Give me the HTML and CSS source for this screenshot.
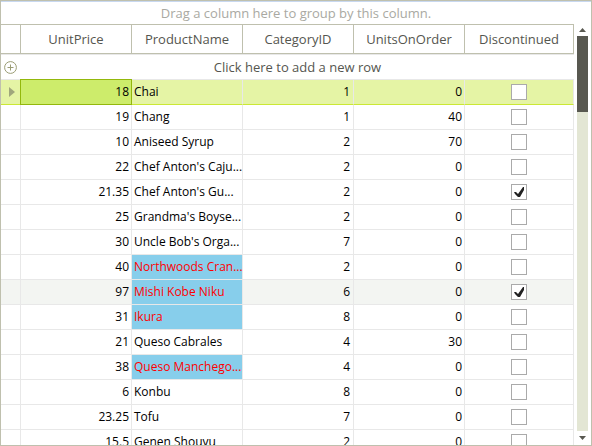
FILE: index.html
```
<!DOCTYPE html>
<html lang="en">
<head>
<meta charset="utf-8">
<title>Products</title>
<link rel="stylesheet" href="styles.css">
</head>
<body>
<main class="grid">
  <div class="group-panel">Drag a column here to group by this column.</div>
  <div class="view">
    <div class="table-wrap">
      <table class="products">
        <colgroup><col class="col-indicator"><col><col><col><col><col class="col-check"></colgroup>
        <thead>
          <tr><th></th><th>UnitPrice</th><th>ProductName</th><th>CategoryID</th><th>UnitsOnOrder</th><th>Discontinued</th></tr>
        </thead>
        <tbody>
          <tr class="new-row">
            <td class="indicator"><svg class="plus" viewBox="0 0 13 13" aria-hidden="true"><circle cx="6.5" cy="6.5" r="5.9"/><path d="M6.5 3.5v6M3.5 6.5h6"/></svg></td>
            <td colspan="5"><button class="add" type="button">Click here to add a new row</button></td>
          </tr>
          <tr class="current">
            <td class="indicator"><svg class="arrow" viewBox="0 0 6 10" aria-hidden="true"><path d="M0 0l6 5l-6 5z"/></svg></td>
            <td class="num active">18</td><td>Chai</td><td class="num id">1</td><td class="num">0</td><td class="check"><input type="checkbox" aria-label="Chai discontinued"></td>
          </tr>
          <tr><td></td><td class="num">19</td><td>Chang</td><td class="num id">1</td><td class="num">40</td><td class="check"><input type="checkbox" aria-label="Chang discontinued"></td></tr>
          <tr><td></td><td class="num">10</td><td>Aniseed Syrup</td><td class="num id">2</td><td class="num">70</td><td class="check"><input type="checkbox" aria-label="Aniseed Syrup discontinued"></td></tr>
          <tr><td></td><td class="num">22</td><td>Chef Anton's Caju...</td><td class="num id">2</td><td class="num">0</td><td class="check"><input type="checkbox" aria-label="Chef Anton's Caju... discontinued"></td></tr>
          <tr><td></td><td class="num">21.35</td><td>Chef Anton's Gu...</td><td class="num id">2</td><td class="num">0</td><td class="check"><input type="checkbox" checked aria-label="Chef Anton's Gu... discontinued"></td></tr>
          <tr><td></td><td class="num">25</td><td>Grandma's Boyse...</td><td class="num id">2</td><td class="num">0</td><td class="check"><input type="checkbox" aria-label="Grandma's Boyse... discontinued"></td></tr>
          <tr><td></td><td class="num">30</td><td>Uncle Bob's Orga...</td><td class="num id">7</td><td class="num">0</td><td class="check"><input type="checkbox" aria-label="Uncle Bob's Orga... discontinued"></td></tr>
          <tr><td></td><td class="num">40</td><td class="flag">Northwoods Cran...</td><td class="num id">2</td><td class="num">0</td><td class="check"><input type="checkbox" aria-label="Northwoods Cran... discontinued"></td></tr>
          <tr class="hover"><td></td><td class="num">97</td><td class="flag">Mishi Kobe Niku</td><td class="num id">6</td><td class="num">0</td><td class="check"><input type="checkbox" checked aria-label="Mishi Kobe Niku discontinued"></td></tr>
          <tr><td></td><td class="num">31</td><td class="flag">Ikura</td><td class="num id">8</td><td class="num">0</td><td class="check"><input type="checkbox" aria-label="Ikura discontinued"></td></tr>
          <tr><td></td><td class="num">21</td><td>Queso Cabrales</td><td class="num id">4</td><td class="num">30</td><td class="check"><input type="checkbox" aria-label="Queso Cabrales discontinued"></td></tr>
          <tr><td></td><td class="num">38</td><td class="flag">Queso Manchego...</td><td class="num id">4</td><td class="num">0</td><td class="check"><input type="checkbox" aria-label="Queso Manchego... discontinued"></td></tr>
          <tr><td></td><td class="num">6</td><td>Konbu</td><td class="num id">8</td><td class="num">0</td><td class="check"><input type="checkbox" aria-label="Konbu discontinued"></td></tr>
          <tr><td></td><td class="num">23.25</td><td>Tofu</td><td class="num id">7</td><td class="num">0</td><td class="check"><input type="checkbox" aria-label="Tofu discontinued"></td></tr>
          <tr><td></td><td class="num">15.5</td><td>Genen Shouyu</td><td class="num id">2</td><td class="num">0</td><td class="check"><input type="checkbox" aria-label="Genen Shouyu discontinued"></td></tr>
        </tbody>
      </table>
    </div>
    <div class="scrollbar">
      <button class="step" type="button" aria-label="Scroll up"><svg viewBox="0 0 7 4" aria-hidden="true"><path d="M0 4L3.5 0L7 4z"/></svg></button>
      <div class="track"><div class="thumb"></div></div>
      <button class="step" type="button" aria-label="Scroll down"><svg viewBox="0 0 7 4" aria-hidden="true"><path d="M0 0L3.5 4L7 0z"/></svg></button>
    </div>
  </div>
</main>
</body>
</html>
```

FILE: styles.css
```
* { box-sizing: border-box; }

body {
  margin: 0;
  font: 12px/16px "Open Sans", "Noto Sans", sans-serif;
  color: #000;
  background: #fff;
}

.grid {
  display: flex;
  flex-direction: column;
  height: 100vh;
  border: 1px solid #bfc0ae;
  overflow: hidden;
}

.group-panel {
  flex: none;
  height: 23px;
  border-top: 1px solid #c8d8f0;
  font-size: 13px;
  line-height: 23px;
  text-align: center;
  color: #a9a9a2;
}

.view {
  display: flex;
  flex: 1;
  min-height: 0;
}

.table-wrap {
  flex: 1;
  min-width: 0;
  overflow: hidden;
}

.products {
  width: 100%;
  table-layout: fixed;
  border-collapse: separate;
  border-spacing: 0;
}

.col-indicator { width: 20px; }
.col-check { width: 109px; }

th {
  height: 30px;
  padding: 0;
  border: solid #bfc0ae;
  border-width: 1px 1px 1px 0;
  font-size: 13px;
  font-weight: 400;
  color: #55564f;
}

td {
  height: 25px;
  padding: 0 2px;
  border: solid #e8e8e8;
  border-width: 0 1px 1px 0;
  white-space: nowrap;
  overflow: hidden;
}

.num { text-align: right; }
.id { padding-right: 3px; }

.new-row td {
  height: 26px;
  padding: 0;
  border-top: 1px solid #e8e8e8;
  border-right: 0;
}

.add {
  display: block;
  width: 100%;
  padding: 0;
  border: 0;
  background: none;
  font: 13px/24px "Open Sans", "Noto Sans", sans-serif;
  color: #55564f;
}

.indicator svg { display: block; margin: 0 auto; }

.new-row .indicator { padding-right: 2px; }

.plus {
  width: 13px;
  height: 13px;
  fill: none;
  stroke: #9a9c74;
}

.arrow {
  width: 6px;
  height: 10px;
  fill: #a0a77c;
}

.current .indicator { padding-left: 5px; }

.current td {
  background: #e5f4a5;
  border-bottom-color: #cbe834;
}

.current .active {
  position: relative;
  overflow: visible;
  background: #cdec6b;
}

.active::after {
  content: "";
  position: absolute;
  inset: -1px;
  border: 1px solid #93b80c;
}

.hover td { background: #f3f5f2; }

td.flag,
.hover td.flag {
  background: #87ceeb;
  color: #f00;
}

.check { padding: 0; }

.check input {
  appearance: none;
  display: block;
  width: 16px;
  height: 16px;
  margin: 0 auto;
  border: 1px solid #aaa;
  background: #fff;
}

.check input:checked::before {
  content: "";
  display: block;
  height: 14px;
  background: #222;
  clip-path: polygon(2px 7px, 4px 7px, 6px 9px, 11px 2px, 12px 2px, 12px 5px, 8px 12px, 6px 12px, 3px 9px);
}

.scrollbar {
  display: flex;
  flex: none;
  flex-direction: column;
  width: 17px;
  padding: 0 3px;
}

.step {
  display: flex;
  flex: none;
  align-items: center;
  justify-content: center;
  height: 12px;
  padding: 0;
  border: 0;
  background: none;
}

.step:last-child { height: 14px; }

.step svg {
  width: 7px;
  height: 4px;
  fill: #585850;
}

.track {
  flex: 1;
  background: #e3e6d4;
}

.thumb {
  height: 19.2%;
  background: #585850;
}
```
